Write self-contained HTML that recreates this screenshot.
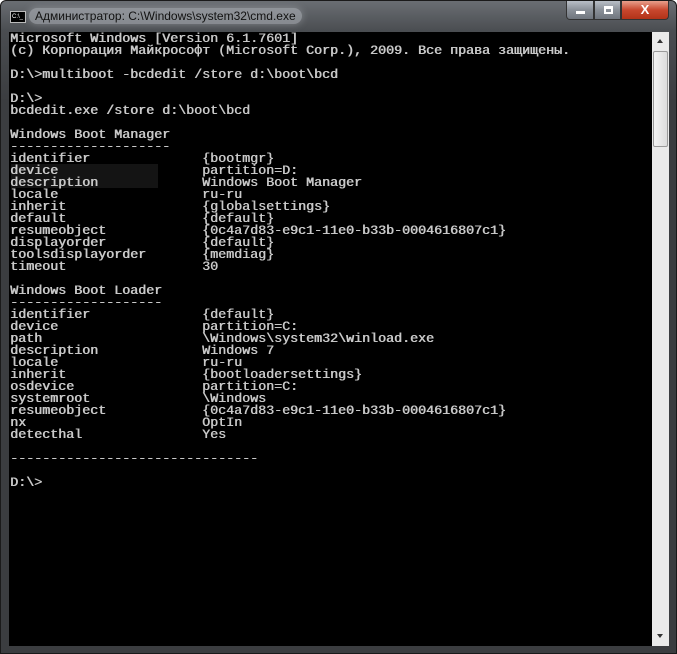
<!DOCTYPE html>
<html><head><meta charset="utf-8"><style>
*{margin:0;padding:0;box-sizing:border-box}
html,body{width:677px;height:654px;overflow:hidden;background:#fff}
#win{position:absolute;left:0;top:0;width:677px;height:654px;background:linear-gradient(#6a6e73 0,#4a4d51 30px,#3b3d40 100px,#3b3d40 100%);border:1px solid #1a1a1a;border-radius:6px 6px 0 0}
#title{position:absolute;left:28px;top:7px;font:12px "Liberation Sans",sans-serif;color:#111;background:rgba(200,205,210,.45);padding:1px 6px;border-radius:8px;box-shadow:0 0 8px rgba(200,205,210,.4)}
#ico{position:absolute;left:9px;top:10px;width:16px;height:12px;background:#000;border:1px solid #bbb;font:6px "Liberation Sans",sans-serif;color:#fff;line-height:10px;padding-left:1px}
.b{position:absolute;top:0;height:19px;border:1px solid #333;border-top:none;background:linear-gradient(#b9bfc7,#8a9098 50%,#6f757d)}
#cl{background:linear-gradient(#e8a08c,#c8472e 50%,#b23318)}
#con{position:absolute;left:8px;top:31px;width:643px;height:614px;background:#000;overflow:hidden}
#hl{position:absolute;left:2px;top:132px;width:147px;height:24px;background:#141414}
pre{position:absolute;left:1px;top:2px;font:13.33px/12px "Liberation Mono","DejaVu Sans Mono",monospace;color:#c8c8c8;white-space:pre;text-shadow:0.6px 0 0 #c8c8c8}
#sb{position:absolute;left:651px;top:31px;width:17px;height:614px;background:#eaeaea}
#th{position:absolute;left:1px;top:19px;width:15px;height:96px;background:linear-gradient(90deg,#f4f4f4,#dcdcdc);border:1px solid #9a9a9a;border-radius:2px}
</style></head><body>
<div id="win">
<div id="ico">C:\_</div>
<div id="title">Администратор: C:\Windows\system32\cmd.exe</div>
<div class="b" style="left:565px;width:28px;border-radius:0 0 0 4px"><div style="position:absolute;left:9px;top:10px;width:9px;height:3px;background:#fff"></div></div>
<div class="b" style="left:593px;width:27px"><div style="position:absolute;left:9px;top:5px;width:9px;height:8px;border:2px solid #fff;border-top-width:3px"></div></div>
<div class="b" id="cl" style="left:620px;width:48px;border-radius:0 0 4px 0;color:#fff;font:bold 13px 'Liberation Sans',sans-serif;text-align:center;line-height:17px">X</div>
<div id="con"><div id="hl"></div><pre>Microsoft Windows [Version 6.1.7601]
(c) Корпорация Майкрософт (Microsoft Corp.), 2009. Все права защищены.

D:\&gt;multiboot -bcdedit /store d:\boot\bcd

D:\&gt;
bcdedit.exe /store d:\boot\bcd

Windows Boot Manager
--------------------
identifier              {bootmgr}
device                  partition=D:
description             Windows Boot Manager
locale                  ru-ru
inherit                 {globalsettings}
default                 {default}
resumeobject            {0c4a7d83-e9c1-11e0-b33b-0004616807c1}
displayorder            {default}
toolsdisplayorder       {memdiag}
timeout                 30

Windows Boot Loader
-------------------
identifier              {default}
device                  partition=C:
path                    \Windows\system32\winload.exe
description             Windows 7
locale                  ru-ru
inherit                 {bootloadersettings}
osdevice                partition=C:
systemroot              \Windows
resumeobject            {0c4a7d83-e9c1-11e0-b33b-0004616807c1}
nx                      OptIn
detecthal               Yes

-------------------------------

D:\&gt;</pre></div>
<div id="sb"><div style="position:absolute;left:5px;top:7px;border:3px solid transparent;border-bottom:4px solid #333;border-top:none;width:0"></div><div id="th"></div><div style="position:absolute;left:5px;bottom:8px;border:3px solid transparent;border-top:4px solid #333;border-bottom:none;width:0"></div></div>
</div>
</body></html>
